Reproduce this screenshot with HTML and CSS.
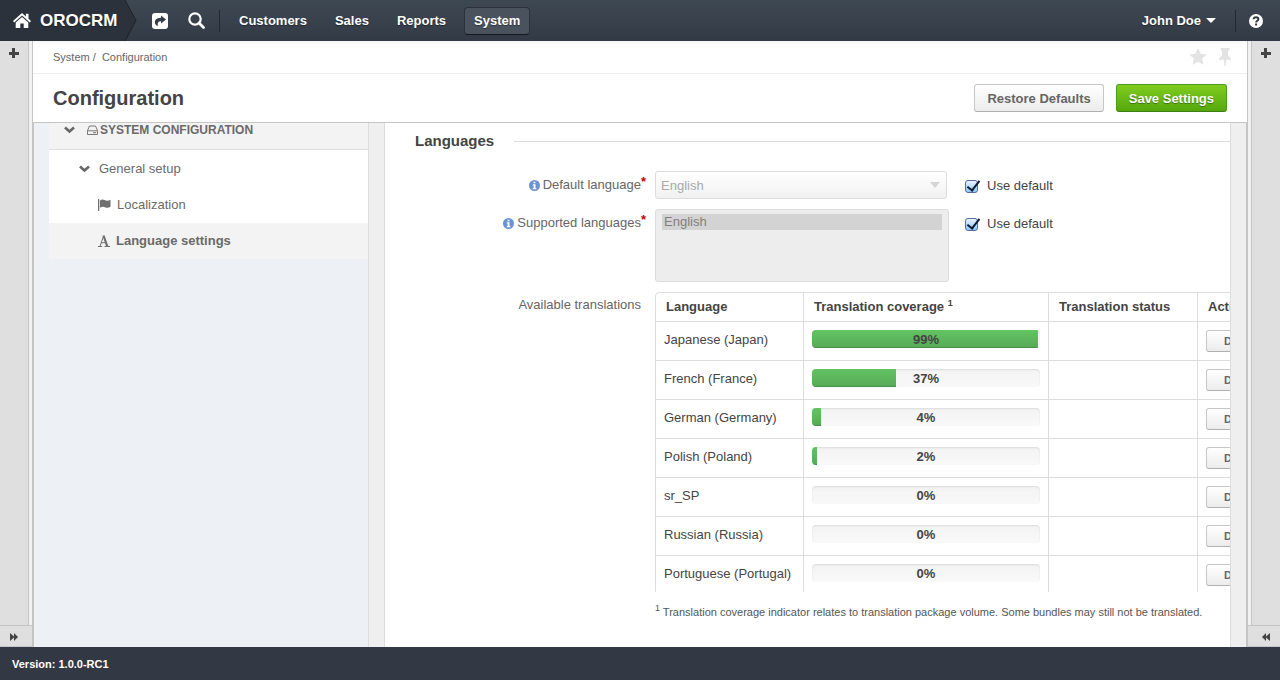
FILE: index.html
```html
<!DOCTYPE html>
<html lang="en">

<head>
    <meta charset="UTF-8">
    <meta name="viewport" content="width=device-width, initial-scale=1.0">
    <title>Configuration - System</title>
    <link rel="stylesheet" href="styles.css">
</head>

<body>
    <header class="topbar">
        <a href="#" class="logo">
            <svg width="18" height="16" viewBox="0 0 18 16" fill="#fff">
                <path d="M9 0 0 8l1.200 1.400L9 2.600l7.800 6.800L18 8l-2.500-2.300V.8h-2.600v2.600z" />
                <path d="M9 4 2.700 9.500V15h4.600v-4.500h3.400V15h4.600V9.500z" />
            </svg>
            OROCRM
        </a>
        <svg class="logo-arrow" width="12" height="41" viewBox="0 0 12 41">
            <path d="M0 0 11 20.500 0 41z" fill="#2b323b" />
            <path d="M0 0 11 20.500 0 41" fill="none" stroke="#1d232a" />
        </svg>
        <button class="icon-btn" aria-label="Shortcuts">
            <svg width="16" height="16" viewBox="0 0 16 16">
                <rect width="16" height="16" rx="3" fill="#fff" />
                <path d="M9 2.500 14 6.500 9 10.500V8.200C6.500 8.200 5.200 9.500 5.800 13.300 3.200 12 2.300 9.800 3.100 7.700 4 5.500 6 4.800 9 4.800z" fill="#343c46" />
            </svg>
        </button>
        <button class="icon-btn search" aria-label="Search">
            <svg width="17" height="17" viewBox="0 0 17 17" fill="none" stroke="#fff">
                <circle cx="7" cy="7" r="5.700" stroke-width="2.200" />
                <path d="M11 11l4.500 4.500" stroke-width="2.800" stroke-linecap="round" />
            </svg>
        </button>
        <span class="divider"></span>
        <nav class="menu">
            <a href="#">Customers</a>
            <a href="#">Sales</a>
            <a href="#">Reports</a>
            <a href="#" class="active">System</a>
        </nav>
        <button class="user">John Doe <span class="caret"></span></button>
        <span class="divider"></span>
        <a href="#" class="help" aria-label="Help">
            <svg width="14" height="14" viewBox="0 0 14 14">
                <circle cx="7" cy="7" r="7" fill="#fff" />
                <path d="M4.700 5.300C4.700 2.600 9.400 2.700 9.400 5.200 9.400 6.800 7.100 6.800 7.100 8.500" fill="none" stroke="#303843" stroke-width="1.900" />
                <rect x="6.100" y="9.500" width="2" height="2" fill="#303843" />
            </svg>
        </a>
    </header>

    <div class="page">
        <aside class="side left">
            <button class="add" aria-label="Add widget"></button>
            <button class="expand" aria-label="Expand">
                <svg width="8" height="8" viewBox="0 0 8 8" fill="#444"><path d="M0 0l4 3.500V0l4 4-4 4V4.500L0 8z" /></svg>
            </button>
        </aside>

        <main class="center">
            <div class="crumbs">
                <span><a href="#">System</a> /&nbsp; Configuration</span>
                <div class="marks">
                    <button aria-label="Favorite">
                        <svg width="18" height="18" viewBox="0 0 18 18" fill="#e3e3e3"><path d="M9 0l2.600 5.700 6.200.7-4.600 4.200 1.300 6.200L9 13.700l-5.500 3.100 1.300-6.200L.2 6.400l6.200-.7z" /></svg>
                    </button>
                    <button aria-label="Pin">
                        <svg width="12" height="18" viewBox="0 0 12 18" fill="#e3e3e3"><path d="M1.500 0h9v2L9 2.700v5c1.800.8 3 2 3 4H7.200L6.500 18h-1l-.7-6.300H0c0-2 1.200-3.200 3-4v-5L1.500 2z" /></svg>
                    </button>
                </div>
            </div>
            <div class="titlebar">
                <h1>Configuration</h1>
                <button class="btn">Restore Defaults</button>
                <button class="btn green">Save Settings</button>
            </div>

            <div class="content">
                <div class="tree-box">
                    <ul class="tree">
                        <li class="root">
                            <svg class="chev" width="11" height="8" viewBox="0 0 11 8"><path d="M1 1.500l4.500 4 4.500-4" fill="none" stroke="#666" stroke-width="2.600" /></svg>
                            <svg class="hdd" width="11" height="10" viewBox="0 0 11 10" fill="none" stroke="#777"><path d="M.5 5.500 2.500 1h6l2 4.500v4H.5zM.5 5.800h10M6 7.700h3" /></svg>
                            <a href="#">SYSTEM CONFIGURATION</a>
                        </li>
                        <li class="group">
                            <svg class="chev" width="11" height="8" viewBox="0 0 11 8"><path d="M1 1.500l4.500 4 4.500-4" fill="none" stroke="#666" stroke-width="2.600" /></svg>
                            <a href="#">General setup</a>
                        </li>
                        <li class="leaf">
                            <svg width="13" height="12" viewBox="0 0 13 12" fill="#707070"><path d="M0 0h1.300v12H0zM2 1.500c2-1.500 3.500-1 5-.3 1.800.8 3.500.5 5.500-.5v7c-2 1.200-3.700 1.300-5.500.5-1.500-.8-3-.8-5 .5z" /></svg>
                            <a href="#">Localization</a>
                        </li>
                        <li class="leaf active">
                            <svg width="12" height="12" viewBox="0 0 12 12" fill="none" stroke="#707070"><path d="M2 11.300 5.500 1M0 11.500h4.200M6.500 11.500H12M3.300 7.700h4" /><path d="M5.500.5 9.300 11.300" stroke-width="2.200" /></svg>
                            <a href="#">Language settings</a>
                        </li>
                    </ul>
                </div>
                <div class="gutter"></div>

                <form class="settings">
                    <h2>Languages</h2>
                    <div class="row">
                        <label class="name" for="lang">
                            <svg width="11" height="11" viewBox="0 0 11 11"><circle cx="5.500" cy="5.500" r="5.500" fill="#6d92d3" /><path d="M4.500 1.700h2v1.600h-2zM3.800 4.300h2.700v3.800h.8v1.200H3.800V8.100h.8V5.500h-.8z" fill="#fff" /></svg>
                            Default language<em>*</em>
                        </label>
                        <div class="select-wrap">
                            <select id="lang" disabled>
                                <option>English</option>
                            </select>
                            <span class="caret"></span>
                        </div>
                        <label class="use"><input type="checkbox" checked> Use default</label>
                    </div>
                    <div class="row">
                        <label class="name" for="langs">
                            <svg width="11" height="11" viewBox="0 0 11 11"><circle cx="5.500" cy="5.500" r="5.500" fill="#6d92d3" /><path d="M4.500 1.700h2v1.600h-2zM3.800 4.300h2.700v3.800h.8v1.200H3.800V8.100h.8V5.500h-.8z" fill="#fff" /></svg>
                            Supported languages<em>*</em>
                        </label>
                        <select id="langs" class="multi" multiple disabled>
                            <option selected>English</option>
                        </select>
                        <label class="use"><input type="checkbox" checked> Use default</label>
                    </div>
                    <div class="row">
                        <span class="name last">Available translations</span>
                        <div class="grid-box">
                            <table>
                                <thead>
                                    <tr>
                                        <th class="c-lang">Language</th>
                                        <th class="c-cover">Translation coverage <sup>1</sup></th>
                                        <th class="c-status">Translation status</th>
                                        <th class="c-action">Action</th>
                                    </tr>
                                </thead>
                                <tbody>
                                    <tr>
                                        <td>Japanese (Japan)</td>
                                        <td><div class="progress"><div class="bar" style="width: 99%"></div><span>99%</span></div></td>
                                        <td></td>
                                        <td><button type="button" class="btn small">Download</button></td>
                                    </tr>
                                    <tr>
                                        <td>French (France)</td>
                                        <td><div class="progress"><div class="bar" style="width: 37%"></div><span>37%</span></div></td>
                                        <td></td>
                                        <td><button type="button" class="btn small">Download</button></td>
                                    </tr>
                                    <tr>
                                        <td>German (Germany)</td>
                                        <td><div class="progress"><div class="bar" style="width: 4%"></div><span>4%</span></div></td>
                                        <td></td>
                                        <td><button type="button" class="btn small">Download</button></td>
                                    </tr>
                                    <tr>
                                        <td>Polish (Poland)</td>
                                        <td><div class="progress"><div class="bar" style="width: 2%"></div><span>2%</span></div></td>
                                        <td></td>
                                        <td><button type="button" class="btn small">Download</button></td>
                                    </tr>
                                    <tr>
                                        <td>sr_SP</td>
                                        <td><div class="progress"><div class="bar" style="width: 0%"></div><span>0%</span></div></td>
                                        <td></td>
                                        <td><button type="button" class="btn small">Download</button></td>
                                    </tr>
                                    <tr>
                                        <td>Russian (Russia)</td>
                                        <td><div class="progress"><div class="bar" style="width: 0%"></div><span>0%</span></div></td>
                                        <td></td>
                                        <td><button type="button" class="btn small">Download</button></td>
                                    </tr>
                                    <tr>
                                        <td>Portuguese (Portugal)</td>
                                        <td><div class="progress"><div class="bar" style="width: 0%"></div><span>0%</span></div></td>
                                        <td></td>
                                        <td><button type="button" class="btn small">Download</button></td>
                                    </tr>
                                </tbody>
                            </table>
                        </div>
                    </div>
                    <p class="note"><sup>1</sup> Translation coverage indicator relates to translation package volume. Some bundles may still not be translated.</p>
                </form>
                <div class="gutter end"></div>
            </div>
        </main>

        <aside class="side right">
            <button class="add" aria-label="Add widget"></button>
            <button class="expand" aria-label="Expand">
                <svg width="8" height="8" viewBox="0 0 8 8" fill="#444"><path d="M8 0 4 3.500V0L0 4l4 4V4.500L8 8z" /></svg>
            </button>
        </aside>
    </div>

    <footer>Version: 1.0.0-RC1</footer>
</body>

</html>
```
FILE: styles.css
```css
* {
    box-sizing: border-box;
}

body {
    margin: 0;
    height: 100vh;
    display: flex;
    flex-direction: column;
    overflow: hidden;
    background: #fff;
    color: #444;
    font-family: "Liberation Sans", Arial, sans-serif;
    font-size: 13px;
    line-height: 18px;
}

a {
    color: inherit;
    text-decoration: none;
}

button,
select,
input {
    font-family: inherit;
    font-size: 13px;
    margin: 0;
}

button {
    padding: 0;
    border: 0;
    background: none;
    cursor: pointer;
}

svg {
    flex: none;
    display: block;
}

/* top bar */
.topbar {
    flex: none;
    height: 41px;
    display: flex;
    align-items: center;
    background: linear-gradient(#3e4853, #323a45);
    color: #fff;
    font-weight: bold;
    text-shadow: 0 1px 1px rgba(0, 0, 0, 0.4);
}

.logo {
    height: 41px;
    width: 125px;
    padding-left: 13px;
    display: flex;
    align-items: center;
    gap: 9px;
    background: #2b323b;
    font-size: 17px;
}

.icon-btn {
    margin-left: 15px;
}

.icon-btn.search {
    margin-left: 20px;
}

.divider {
    height: 22px;
    margin-left: 14px;
    border-left: 1px solid #222930;
}

.menu {
    display: flex;
    gap: 8px;
    padding-left: 9px;
    line-height: 22px;
}

.menu a {
    padding: 2px 9px;
    border: 1px solid transparent;
    border-radius: 4px;
}

.menu a.active {
    background: #4a525e;
    border-color: #2b323a;
    border-bottom-color: #14181c;
}

.caret {
    border: 5px solid transparent;
    border-top-color: #fff;
    border-bottom: 0;
}

.user {
    margin: 0 5px 0 auto;
    display: flex;
    align-items: center;
    gap: 5px;
    color: #fff;
    font-weight: bold;
    text-shadow: inherit;
}

.help {
    padding: 0 17px 0 13px;
}

/* side panels */
.page {
    flex: 1;
    min-height: 0;
    display: flex;
}

.side {
    flex: none;
    width: 33px;
    display: flex;
    flex-direction: column;
    background: #f0f0f0;
    border: 0 solid #c5c5c5;
}

.left {
    border-right-width: 1px;
}

.right {
    border-left-width: 1px;
}

.add {
    flex: 1;
    border: 0 solid #c5c5c5;
    background:
        linear-gradient(#444, #444) 9px 11px / 10px 3px no-repeat,
        linear-gradient(#444, #444) 12px 7px / 3px 10px no-repeat,
        #dfdfdf;
}

.left .add {
    margin-right: 3px;
    border-right-width: 1px;
}

.right .add {
    margin-left: 3px;
    border-left-width: 1px;
}

.expand {
    height: 22px;
    padding: 2px 0 0 10px;
    border-top: 1px solid #c5c5c5;
    border-bottom: 1px solid #c5c5c5;
    background: #dfdfdf;
}

.right .expand {
    padding-left: 14px;
}

/* center */
.center {
    flex: 1;
    min-width: 0;
    display: flex;
    flex-direction: column;
}

.crumbs {
    display: flex;
    justify-content: space-between;
    align-items: center;
    height: 33px;
    padding: 0 16px 0 20px;
    border-bottom: 1px solid #eee;
    background: linear-gradient(#f6f6f6, #fff 4px);
    color: #666;
    font-size: 11px;
}

.marks {
    display: flex;
    gap: 12px;
}

.titlebar {
    display: flex;
    align-items: center;
    gap: 12px;
    height: 48px;
    padding: 0 20px;
}

h1 {
    margin: 0 auto 0 0;
    font-size: 20px;
}

.btn {
    height: 28px;
    padding: 0 12px;
    border: 1px solid #c6c6c6;
    border-bottom-color: #b0b0b0;
    border-radius: 3px;
    background: linear-gradient(#fff, #ececec);
    color: #666;
    font-weight: bold;
    white-space: nowrap;
}

.btn.green {
    border-color: #4d9c1c;
    border-bottom-color: #3c7f12;
    background: linear-gradient(#80cc1f, #55a80d);
    color: #fff;
    text-shadow: 0 1px 1px rgba(0, 0, 0, 0.4);
}

.content {
    flex: 1;
    min-height: 0;
    display: flex;
    border: 1px solid #c5c5c5;
    border-bottom: 0;
}

.tree-box {
    flex: none;
    width: 334px;
    padding-left: 15px;
    background: #edf1f5;
}

.tree {
    margin: 0;
    padding: 0;
    list-style: none;
    color: #6a6a6a;
}

.tree li {
    display: flex;
    align-items: center;
    height: 36px;
    background: #fff;
}

.tree .root {
    height: 27px;
    padding: 0 0 12px 15px;
    border-bottom: 1px solid #ddd;
    background: #f3f3f3;
    font-size: 12px;
    font-weight: bold;
}

.hdd {
    margin: 0 2px 0 12px;
}

.tree .group {
    height: 37px;
    gap: 9px;
    padding-left: 30px;
}

.tree .leaf {
    gap: 6px;
    padding-left: 49px;
}

.tree .active {
    background: #f3f3f3;
    font-weight: bold;
}

.gutter {
    flex: none;
    width: 17px;
    background: #efefef;
    border: 1px solid #ddd;
    border-width: 0 1px;
}

.gutter.end {
    width: 16px;
    border-right: 0;
}

/* settings form */
.settings {
    flex: 1;
    min-width: 0;
    padding: 9px 0 0 30px;
    overflow: hidden;
}

h2 {
    display: flex;
    align-items: center;
    gap: 20px;
    margin: 0 0 21px;
    font-size: 15px;
}

h2::after {
    content: "";
    flex: 1;
    border-top: 1px solid #ddd;
}

.row {
    display: flex;
    align-items: flex-start;
    margin-bottom: 10px;
}

.name {
    flex: none;
    display: flex;
    justify-content: flex-end;
    align-items: center;
    gap: 3px;
    width: 231px;
    margin-right: 9px;
    padding-top: 5px;
    color: #666;
}

.name.last {
    padding: 4px 5px 0 0;
}

.name em {
    margin-left: -3px;
    color: #c00;
    font-style: normal;
    font-weight: bold;
    line-height: 12px;
    align-self: flex-start;
}

.select-wrap {
    position: relative;
    width: 294px;
    padding-right: 2px;
}

.select-wrap select {
    appearance: none;
    display: block;
    width: 100%;
    height: 28px;
    padding: 0 5px;
    border: 1px solid #ddd;
    border-radius: 3px;
    background: linear-gradient(#fff, #f1f1f1);
    color: #aaa;
    opacity: 1;
}

.select-wrap .caret {
    position: absolute;
    right: 9px;
    top: 11px;
    border-width: 6px 5px 0;
    border-top-color: #d5d5d5;
}

.multi {
    width: 294px;
    height: 73px;
    padding: 4px 6px;
    border: 1px solid #ddd;
    border-radius: 3px;
    background: #ededed;
    opacity: 1;
    overflow: hidden;
}

.multi option {
    padding: 0 2px;
    min-height: 16px;
    line-height: 16px;
    color: #808080;
    background: #d3d3d3 linear-gradient(#d3d3d3, #d3d3d3);
}

.use {
    display: flex;
    align-items: center;
    gap: 9px;
    padding-top: 6px;
    margin-left: 16px;
}

.use input {
    appearance: none;
    position: relative;
    width: 13px;
    height: 13px;
    border: 1px solid #5a6a9a;
    border-radius: 3px;
    background: linear-gradient(#e8f3fd, #8fc8f5);
}

.use input:checked::after {
    content: "";
    position: absolute;
    left: 4px;
    top: -3px;
    width: 5px;
    height: 11px;
    border: solid #0b1c33;
    border-width: 0 2px 2px 0;
    transform: rotate(38deg);
}

.grid-box {
    flex: 1;
    min-width: 0;
    height: 300px;
    overflow: hidden;
}

table {
    table-layout: fixed;
    width: 690px;
    border: 1px solid #ddd;
    border-radius: 4px;
    border-spacing: 0;
    line-height: 20px;
}

th,
td {
    padding: 8px;
    border-left: 1px solid #ddd;
    vertical-align: top;
    text-align: left;
}

th {
    height: 28px;
    padding: 4px 10px;
}

td {
    height: 39px;
    padding-bottom: 0;
    border-top: 1px solid #ddd;
}

th:first-child,
td:first-child {
    border-left: 0;
}

.c-lang {
    width: 147px;
}

.c-cover {
    width: 245px;
}

.c-status {
    width: 149px;
}

sup {
    font-size: 9px;
    line-height: 0;
}

.progress {
    position: relative;
    height: 18px;
    border-radius: 4px;
    overflow: hidden;
    background: linear-gradient(#f3f3f3, #f9f9f9);
    box-shadow: inset 0 1px 2px rgba(0, 0, 0, 0.1);
}

.bar {
    height: 18px;
    background: linear-gradient(#62c462, #57a957);
    box-shadow: inset 0 -1px 0 rgba(0, 0, 0, 0.15);
}

.progress span {
    position: absolute;
    inset: 0;
    text-align: center;
    font-weight: bold;
}

.btn.small {
    display: block;
    height: 22px;
    padding: 0 17px;
    font-size: 11px;
}

.note {
    margin: 0 0 0 240px;
    color: #555;
    font-size: 11px;
    line-height: 20px;
    white-space: nowrap;
}

footer {
    flex: none;
    height: 33px;
    padding: 8px 12px;
    background: #333944;
    color: #fff;
    font-size: 11px;
    font-weight: bold;
}
```
